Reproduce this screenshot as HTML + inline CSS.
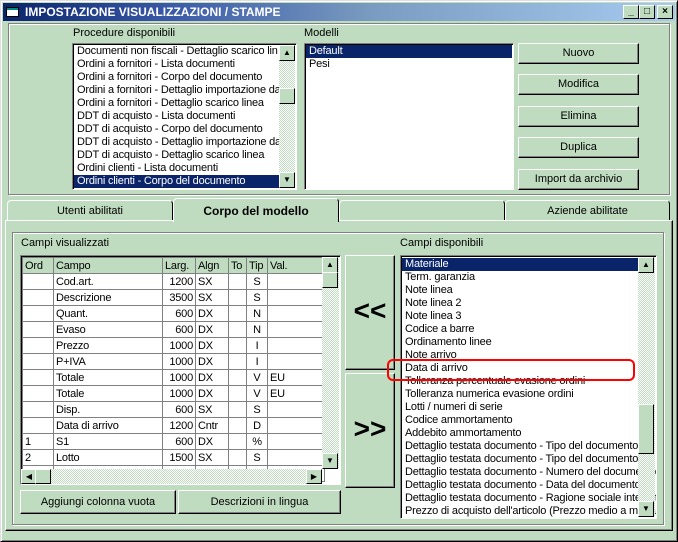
<!DOCTYPE html>
<html><head><meta charset="utf-8"><style>
*{box-sizing:border-box;margin:0;padding:0}
body{width:678px;height:542px;background:#c0dcc0;font-family:"Liberation Sans",sans-serif;font-size:11px;position:relative;overflow:hidden;color:#000}
.a{position:absolute}
.win{left:0;top:0;width:678px;height:542px;border:1px solid;border-color:#dfdfdf #000 #000 #dfdfdf;box-shadow:inset 1px 1px #fff,inset -1px -1px #808080}
.title{left:3px;top:3px;width:672px;height:18px;background:linear-gradient(90deg,#0a246a 0%,#3a5aa8 25%,#7a9cc0 55%,#a6caf0 100%);color:#fff;font-weight:bold;font-size:12px;line-height:18px;padding-left:22px}
.tb{top:5px;width:16px;height:14px;background:#c0dcc0;border:1px solid;border-color:#fff #000 #000 #fff;font-size:10px;font-weight:bold;text-align:center;line-height:12px}
.fr{border:1px solid #808080;box-shadow:1px 1px #fff,inset 1px 1px #fff}
.sunk{background:#fff;border:1px solid;border-color:#808080 #fff #fff #808080;box-shadow:inset 1px 1px #000}
.btn{background:#c0dcc0;border:1px solid;border-color:#fff #000 #000 #fff;box-shadow:inset -1px -1px #808080;text-align:center;font-size:11px}
.list div{height:13px;line-height:13px;padding-left:3px;white-space:nowrap;overflow:hidden;letter-spacing:-0.2px}
.sel{background:#0a246a;color:#fff}
.sb{background:repeating-conic-gradient(#fff 0 25%,#c0dcc0 0 50%) 0 0/2px 2px}
.arr{width:16px;height:16px;background:#c0dcc0;border:1px solid;border-color:#fff #000 #000 #fff;font-size:8px;text-align:center;line-height:14px}
.tab{top:200px;height:20px;border:1px solid #fff;border-right-color:#000;border-bottom:none;border-radius:4px 4px 0 0;text-align:center;line-height:20px;font-size:11px}
table{border-collapse:collapse;font-size:11px}
td{border:1px solid #808080;height:16px;padding:0 2px;white-space:nowrap;overflow:hidden;letter-spacing:-0.2px}
</style></head><body>
<div class="a win"></div>
<div class="a title">IMPOSTAZIONE VISUALIZZAZIONI / STAMPE</div>
<div class="a" style="left:6px;top:7px;width:13px;height:10px;background:#fff;border:1px solid #000;box-shadow:inset 0 2px #088"></div>
<div class="a tb" style="left:623px">_</div>
<div class="a tb" style="left:639px">□</div>
<div class="a tb" style="left:657px">×</div>

<div class="a fr" style="left:8px;top:23px;width:662px;height:172px"></div>
<div class="a" style="left:73px;top:27px">Procedure disponibili</div>
<div class="a sunk list" style="left:72px;top:43px;width:225px;height:147px;padding:1px 0 0 1px;overflow:hidden">
<div>Documenti non fiscali - Dettaglio scarico lin</div><div>Ordini a fornitori - Lista documenti</div><div>Ordini a fornitori - Corpo del documento</div><div>Ordini a fornitori - Dettaglio importazione da</div><div>Ordini a fornitori - Dettaglio scarico linea</div><div>DDT di acquisto - Lista documenti</div><div>DDT di acquisto - Corpo del documento</div><div>DDT di acquisto - Dettaglio importazione da</div><div>DDT di acquisto - Dettaglio scarico linea</div><div>Ordini clienti - Lista documenti</div><div class="sel" style="width:205px">Ordini clienti - Corpo del documento</div>
</div>
<div class="a sb" style="left:279px;top:45px;width:16px;height:143px"></div>
<div class="a arr" style="left:279px;top:45px">▲</div>
<div class="a arr" style="left:279px;top:88px"></div>
<div class="a arr" style="left:279px;top:172px">▼</div>

<div class="a" style="left:304px;top:27px">Modelli</div>
<div class="a sunk list" style="left:304px;top:43px;width:210px;height:147px;padding:1px 1px 0 1px">
<div class="sel">Default</div><div>Pesi</div></div>
<div class="a btn" style="left:518px;top:43px;width:121px;height:21px;line-height:19px">Nuovo</div>
<div class="a btn" style="left:518px;top:74px;width:121px;height:21px;line-height:19px">Modifica</div>
<div class="a btn" style="left:518px;top:106px;width:121px;height:21px;line-height:19px">Elimina</div>
<div class="a btn" style="left:518px;top:137px;width:121px;height:21px;line-height:19px">Duplica</div>
<div class="a btn" style="left:518px;top:169px;width:121px;height:21px;line-height:19px">Import da archivio</div>

<div class="a" style="left:5px;top:220px;width:668px;height:311px;border:1px solid;border-color:#fff #000 #000 #fff;box-shadow:inset -1px -1px #808080"></div>
<div class="a tab" style="left:7px;width:166px">Utenti abilitati</div>
<div class="a tab" style="left:339px;width:166px"></div>
<div class="a tab" style="left:505px;width:165px">Aziende abilitate</div>
<div class="a tab" style="left:173px;top:198px;height:24px;width:166px;background:#c0dcc0;font-weight:bold;line-height:24px;font-size:12px">Corpo del modello</div>

<div class="a fr" style="left:12px;top:232px;width:652px;height:293px"></div>
<div class="a" style="left:21px;top:237px">Campi visualizzati</div>
<div class="a sunk" style="left:20px;top:255px;width:321px;height:230px;overflow:hidden;padding:1px 0 0 1px">
<table style="width:302px;table-layout:fixed">
<colgroup><col style="width:31px"><col style="width:109px"><col style="width:33px"><col style="width:33px"><col style="width:18px"><col style="width:21px"><col style="width:57px"></colgroup>
<tr style="background:#c0dcc0"><td>Ord</td><td>Campo</td><td>Larg.</td><td>Algn</td><td>To</td><td>Tip</td><td>Val.</td></tr>
<tr><td></td><td>Cod.art.</td><td align=right>1200</td><td>SX</td><td></td><td align=center>S</td><td></td></tr>
<tr><td></td><td>Descrizione</td><td align=right>3500</td><td>SX</td><td></td><td align=center>S</td><td></td></tr>
<tr><td></td><td>Quant.</td><td align=right>600</td><td>DX</td><td></td><td align=center>N</td><td></td></tr>
<tr><td></td><td>Evaso</td><td align=right>600</td><td>DX</td><td></td><td align=center>N</td><td></td></tr>
<tr><td></td><td>Prezzo</td><td align=right>1000</td><td>DX</td><td></td><td align=center>I</td><td></td></tr>
<tr><td></td><td>P+IVA</td><td align=right>1000</td><td>DX</td><td></td><td align=center>I</td><td></td></tr>
<tr><td></td><td>Totale</td><td align=right>1000</td><td>DX</td><td></td><td align=center>V</td><td>EU</td></tr>
<tr><td></td><td>Totale</td><td align=right>1000</td><td>DX</td><td></td><td align=center>V</td><td>EU</td></tr>
<tr><td></td><td>Disp.</td><td align=right>600</td><td>SX</td><td></td><td align=center>S</td><td></td></tr>
<tr><td></td><td>Data di arrivo</td><td align=right>1200</td><td>Cntr</td><td></td><td align=center>D</td><td></td></tr>
<tr><td>1</td><td>S1</td><td align=right>600</td><td>DX</td><td></td><td align=center>%</td><td></td></tr>
<tr><td>2</td><td>Lotto</td><td align=right>1500</td><td>SX</td><td></td><td align=center>S</td><td></td></tr>
<tr><td>3</td><td>Lunghezza</td><td align=right>1000</td><td>SX</td><td></td><td align=center>S</td><td></td></tr>
</table></div>
<div class="a sb" style="left:322px;top:257px;width:17px;height:212px"></div>
<div class="a arr" style="left:322px;top:257px">▲</div>
<div class="a arr" style="left:322px;top:272px"></div>
<div class="a arr" style="left:322px;top:453px">▼</div>
<div class="a" style="left:21px;top:469px;width:301px;height:15px;background:#c0dcc0"></div>
<div class="a sb" style="left:21px;top:469px;width:301px;height:15px"></div>
<div class="a arr" style="left:21px;top:469px;height:15px">◀</div>
<div class="a arr" style="left:35px;top:469px;height:15px"></div>
<div class="a arr" style="left:306px;top:469px;height:15px">▶</div>

<div class="a btn" style="left:20px;top:490px;width:156px;height:24px;line-height:22px">Aggiungi colonna vuota</div>
<div class="a btn" style="left:178px;top:490px;width:163px;height:24px;line-height:22px">Descrizioni in lingua</div>

<div class="a btn" style="left:345px;top:255px;width:50px;height:115px;line-height:110px;font-size:28px;font-weight:bold">&lt;&lt;</div>
<div class="a btn" style="left:345px;top:373px;width:50px;height:115px;line-height:110px;font-size:28px;font-weight:bold">&gt;&gt;</div>

<div class="a" style="left:400px;top:237px">Campi disponibili</div>
<div class="a sunk list" style="left:400px;top:255px;width:257px;height:264px;padding:2px 0 0 1px;overflow:hidden">
<div class="sel" style="width:237px">Materiale</div><div>Term. garanzia</div><div>Note linea</div><div>Note linea 2</div><div>Note linea 3</div><div>Codice a barre</div><div>Ordinamento linee</div><div>Note arrivo</div><div>Data di arrivo</div><div>Tolleranza percentuale evasione ordini</div><div>Tolleranza numerica evasione ordini</div><div>Lotti / numeri di serie</div><div>Codice ammortamento</div><div>Addebito ammortamento</div><div>Dettaglio testata documento - Tipo del documento</div><div>Dettaglio testata documento - Tipo del documento</div><div>Dettaglio testata documento - Numero del documento</div><div>Dettaglio testata documento - Data del documento</div><div>Dettaglio testata documento - Ragione sociale intestatario</div><div>Prezzo di acquisto dell'articolo (Prezzo medio a magazzino)</div>
</div>
<div class="a sb" style="left:638px;top:257px;width:17px;height:260px"></div>
<div class="a arr" style="left:638px;top:257px">▲</div>
<div class="a arr" style="left:638px;top:404px;height:50px"></div>
<div class="a arr" style="left:638px;top:501px">▼</div>
<div class="a" style="left:387px;top:359px;width:248px;height:22px;border:2px solid #f00;border-radius:6px"></div>
</body></html>
